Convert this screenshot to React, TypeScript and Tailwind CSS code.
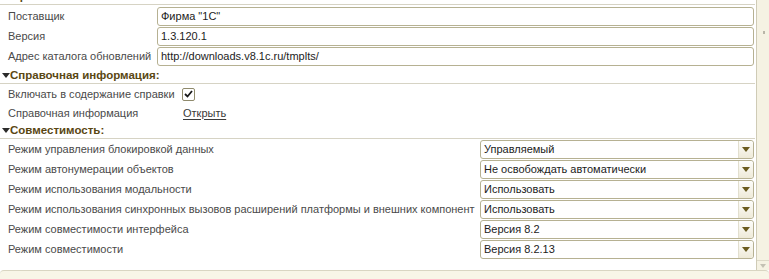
import React from "react"

const FONT = "font-['Liberation_Sans',Arial,sans-serif]"

const DEV_ROWS = [
  { label: "Поставщик", value: "Фирма \"1С\"" },
  { label: "Версия", value: "1.3.120.1" },
  { label: "Адрес каталога обновлений", value: "http://downloads.v8.1c.ru/tmplts/" },
]

const COMPAT_ROWS = [
  { label: "Режим управления блокировкой данных", value: "Управляемый" },
  { label: "Режим автонумерации объектов", value: "Не освобождать автоматически" },
  { label: "Режим использования модальности", value: "Использовать" },
  { label: "Режим использования синхронных вызовов расширений платформы и внешних компонент", value: "Использовать" },
  { label: "Режим совместимости интерфейса", value: "Версия 8.2" },
  { label: "Режим совместимости", value: "Версия 8.2.13" },
]

function GroupHeader({ title, arrow = true }: { title: string; arrow?: boolean }) {
  return (
    <div className="h-[17px] flex items-end border-b border-[#d6d3c4] pb-[1px]">
      {arrow && (
        <svg width="8" height="5" viewBox="0 0 8 5" className="ml-[2px] mb-[4px]">
          <path d="M0 0 H8 L4 5 Z" fill="#2b2b2b" />
        </svg>
      )}
      <span className="text-[11.5px] leading-[14px] font-bold text-[#5a4713]">{title}</span>
    </div>
  )
}

function Arrow() {
  return (
    <div className="w-[15px] self-stretch flex items-center justify-center rounded-r-[3px] border-l border-[#e2dfcf] bg-gradient-to-b from-[#fdfdfb] to-[#eeead8]">
      <svg width="8" height="5" viewBox="0 0 8 5">
        <path d="M0 0 H8 L4 5 Z" fill="#6a5b1e" />
      </svg>
    </div>
  )
}

export default function App() {
  return (
    <div className={`w-[769px] h-[279px] overflow-hidden bg-white flex flex-col ${FONT}`}>
      <div className="flex-1 flex min-h-0">
        {/* form body */}
        <div className="flex-1 flex flex-col overflow-hidden">
          <div className="-mt-[12px]">
            <GroupHeader title="Разработка:" arrow={false} />
          </div>
          <div className="flex flex-col gap-[1px] mt-[2px] pr-[1px]">
            {DEV_ROWS.map((r) => (
              <div key={r.label} className="h-[19px] flex items-center">
                <span className="w-[157px] pl-[8px] text-[11px] text-[#4a4a4a] whitespace-nowrap">{r.label}</span>
                <div className="flex-1 h-[19px] flex items-center rounded-[3px] border border-[#b6b192] px-[3px] text-[11px] text-[#1c1c1c]">
                  {r.value}
                </div>
              </div>
            ))}
          </div>

          <div className="mt-[1px]">
            <GroupHeader title="Справочная информация:" />
          </div>
          <div className="flex flex-col gap-[1px] mt-[1px]">
            <div className="h-[18px] flex items-center">
              <span className="w-[182px] pl-[8px] text-[11px] text-[#4a4a4a] whitespace-nowrap">Включать в содержание справки</span>
              <div className="w-[13px] h-[13px] rounded-[2px] border border-[#8f8a6c] bg-white flex items-center justify-center">
                <svg width="9" height="8" viewBox="0 0 9 8">
                  <path d="M1 4 L3.5 6.5 L8 1" stroke="#1a1a1a" strokeWidth="1.8" fill="none" />
                </svg>
              </div>
            </div>
            <div className="h-[18px] flex items-center">
              <span className="w-[183px] pl-[8px] text-[11px] text-[#4a4a4a] whitespace-nowrap">Справочная информация</span>
              <span className="text-[11px] text-[#3a3a3a] underline underline-offset-2">Открыть</span>
            </div>
          </div>

          <div>
            <GroupHeader title="Совместимость:" />
          </div>
          <div className="flex flex-col gap-[1px] mt-[1px] pr-[1px]">
            {COMPAT_ROWS.map((r) => (
              <div key={r.label} className="h-[19px] flex items-center">
                <span className="w-[480px] pl-[8px] text-[11px] text-[#4a4a4a] whitespace-nowrap">{r.label}</span>
                <div className="flex-1 h-[19px] flex items-center rounded-[3px] border border-[#b6b192] text-[11px] text-[#1c1c1c]">
                  <span className="flex-1 px-[3px]">{r.value}</span>
                  <Arrow />
                </div>
              </div>
            ))}
          </div>
        </div>

        {/* scrollbar */}
        <div className="w-[13px] ml-[1px] flex flex-col border-l border-[#cfcbb6] bg-[#f5f2e3]">
          <div className="flex-1 relative">
            <div className="absolute left-[6px] top-[31px] w-[2px] h-[3px] bg-[#b9b6a8]" />
          </div>
          <div className="h-[10px] border-t border-[#ddd9c8] flex items-center justify-center">
            <svg width="6" height="4" viewBox="0 0 6 4">
              <path d="M0 0 H6 L3 4 Z" fill="#c4c1b4" />
            </svg>
          </div>
        </div>
      </div>

      {/* bottom panel */}
      <div className="h-[9px] rounded-t-[4px] border-t border-[#d9d5c2] bg-[#f8f5e7]" />
    </div>
  )
}
